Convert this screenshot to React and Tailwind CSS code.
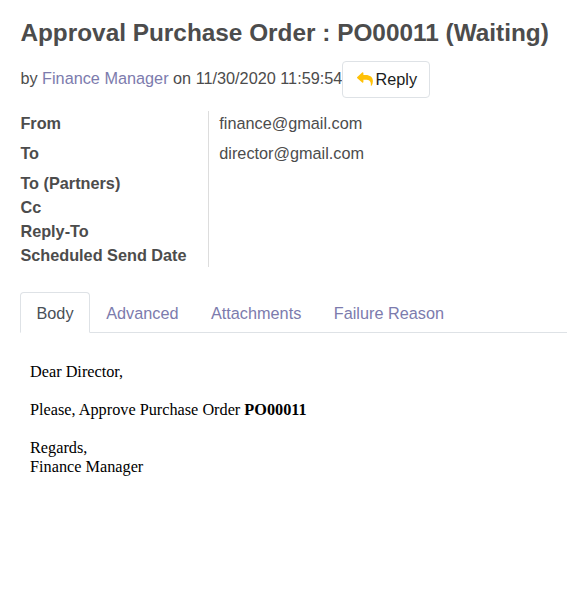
const fields = [
  { label: "From", value: "finance@gmail.com", row: "h-[30px]" },
  { label: "To", value: "director@gmail.com", row: "h-[30px]" },
  { label: "To (Partners)", value: "", row: "h-6" },
  { label: "Cc", value: "", row: "h-6" },
  { label: "Reply-To", value: "", row: "h-6" },
  { label: "Scheduled Send Date", value: "", row: "h-6" },
];

function ReplyIcon({ className }) {
  return (
    <svg viewBox="0 0 16 14" fill="currentColor" className={className}>
      <path d="M0.3 4.9 5.2 0.4Q6.2-0.2 6.4 0.9V3.1H8.5C13.2 3.1 15.9 5.2 15.9 9.3Q15.9 12 14.4 13.7 13.8 14.2 13.8 13.4C14.2 9.4 12.6 7.8 8.5 7.8H6.4V10Q6.2 11.1 5.2 10.5L0.3 6.2Q-0.3 5.5 0.3 4.9Z" />
    </svg>
  );
}

export default function App() {
  return (
    <div className="h-[591px] w-[567px] overflow-hidden bg-white pl-5 font-['Liberation_Sans',Arial,sans-serif] text-[16.25px] leading-6 text-[#4c4c4c]">
      <h1 className="pt-[18px] pl-[0.4px] text-[24.375px] leading-[29px] font-bold whitespace-nowrap">
        Approval Purchase Order : PO00011 (Waiting)
      </h1>
      <div className="mt-[14px] flex h-[37px] items-start whitespace-nowrap">
        <span className="w-[322px] pt-[5px] pl-[0.4px]">
          by <a className="text-[#7c7bad]">Finance Manager</a> on 11/30/2020 11:59:54
        </span>
        <button className="flex h-[37px] w-[88px] items-start rounded-[4px] border border-[#dee2e6] pt-[5px] pl-[14px] text-[#1a1d20]">
          <ReplyIcon className="mt-[5px] mr-[2.5px] h-[14px] w-4 shrink-0 text-[#ffc107]" />
          Reply
        </button>
      </div>
      <dl className="mt-[13px]">
        {fields.map((f) => (
          <div key={f.label} className={"flex " + f.row}>
            <dt className="w-[189px] border-r border-[#dddddd] pl-[0.4px] font-bold">{f.label}</dt>
            <dd className="pl-[10.3px]">{f.value}</dd>
          </div>
        ))}
      </dl>
      <nav className="mt-[25px] flex h-[41px] border-b border-[#dee2e6] text-[#7c7bad]">
        <a className="h-[41px] w-[70px] rounded-t border border-b-white border-[#dee2e6] pt-2 text-center text-[#495057]">Body</a>
        <a className="pt-[9px] pl-[16.2px]">Advanced</a>
        <a className="pt-[9px] pl-[32.5px]">Attachments</a>
        <a className="pt-[9px] pl-[32.5px]">Failure Reason</a>
      </nav>
      <div className="pt-[30px] pl-[10px] font-['Liberation_Serif',serif] leading-[19px] text-black">
        <p>Dear Director,</p>
        <p className="mt-[19px]">Please, Approve Purchase Order <b>PO00011</b></p>
        <p className="mt-[19px]">Regards,<br />Finance Manager</p>
      </div>
    </div>
  );
}
